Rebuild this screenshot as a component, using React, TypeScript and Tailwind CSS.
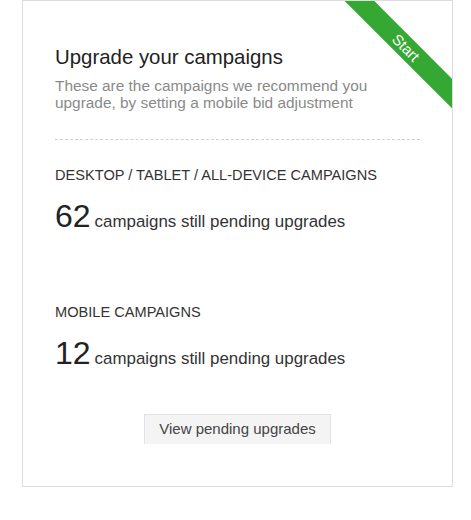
export default function App() {
  return (
    <div className="w-[471px] h-[520px] bg-white" style={{ fontFamily: '"Liberation Sans", Arial, sans-serif' }}>
      <div className="ml-[22px] w-[431px] relative overflow-hidden border border-[#dcdcdc] bg-white px-8 pt-[44px] pb-[42px]">
        <div className="absolute left-[298px] top-[36px] w-[170px] h-[21px] bg-[#35a834] rotate-45 flex items-center justify-center">
          <span className="text-white text-[15px] leading-none">Start</span>
        </div>
        <h1 className="text-[20.4px] leading-[24px] text-[#222]">Upgrade your campaigns</h1>
        <p className="mt-[8px] text-[15.4px] leading-[17px] text-[#8a8a8a] w-[330px]">
          These are the campaigns we recommend you upgrade, by setting a mobile bid adjustment
        </p>
        <div className="mt-[28px] border-t border-dashed border-[#d0d0d0]" />
        <div className="mt-[26px] text-[14.6px] leading-[18px] text-[#333]">DESKTOP / TABLET / ALL-DEVICE CAMPAIGNS</div>
        <div className="mt-[17px] flex items-baseline gap-1 text-[#222]">
          <span className="text-[32px] leading-[31px]">62</span>
          <span className="text-[16.9px] leading-[20px] text-[#333]">campaigns still pending upgrades</span>
        </div>
        <div className="mt-[71px] text-[14.6px] leading-[18px] text-[#333]">MOBILE CAMPAIGNS</div>
        <div className="mt-[17px] flex items-baseline gap-1 text-[#222]">
          <span className="text-[32px] leading-[31px]">12</span>
          <span className="text-[16.9px] leading-[20px] text-[#333]">campaigns still pending upgrades</span>
        </div>
        <div className="mt-[45px] flex justify-center">
          <button className="w-[187px] h-[30px] bg-[#f4f4f4] border-t border-l border-r border-[#e2e2e2] text-[15px] text-[#444]">
            View pending upgrades
          </button>
        </div>
      </div>
    </div>
  );
}
